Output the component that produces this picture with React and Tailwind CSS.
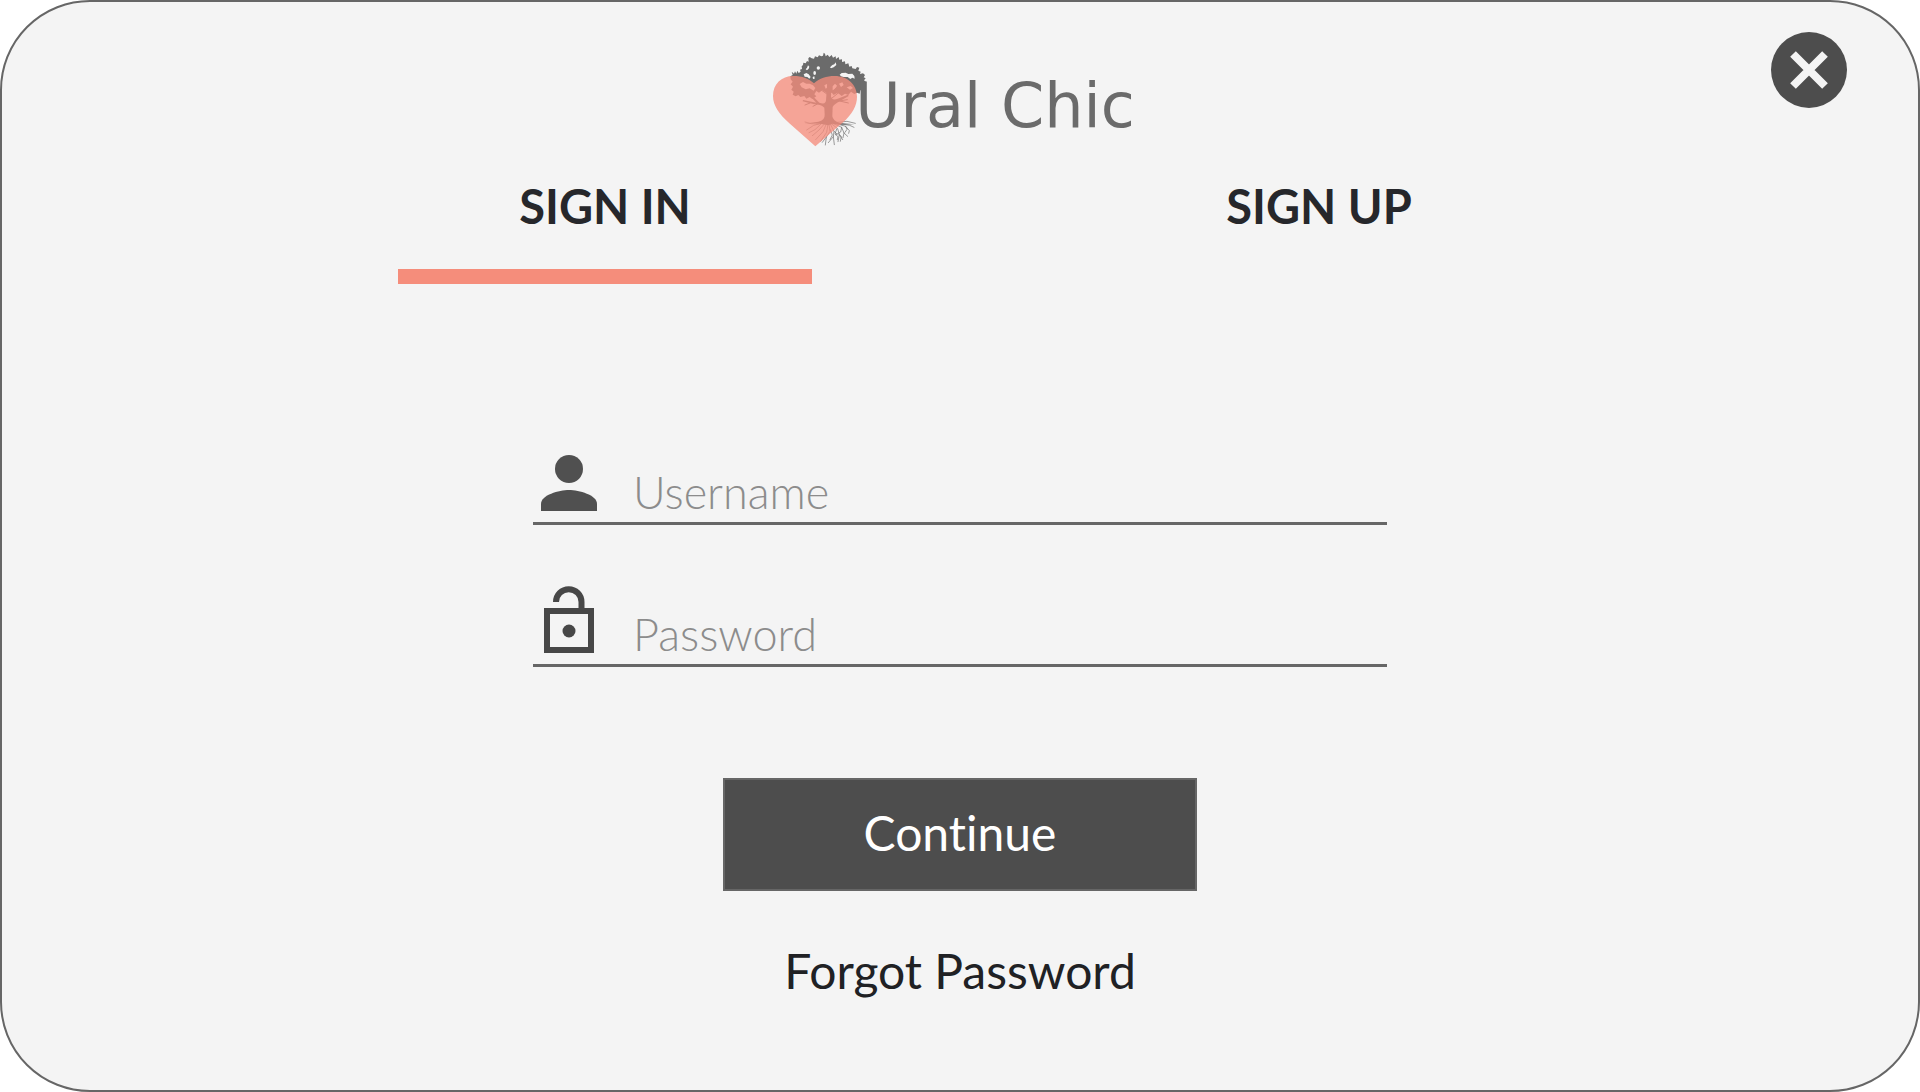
import { useState } from "react";

function TreeHeartLogo() {
  return (
    <svg viewBox="0 0 330 330" className="size-[110px] shrink-0" aria-hidden="true">
      <g fill="#6b6b6b">
        <path
          fillRule="evenodd"
          d="M76 94 L83 90 L80 80 L87 86 L90 79 L94 86 L97 77 L101 84 L107 80 L105 74 L111 72 L110 64 L114 60 L115 53 L122 55 L126 48 L131 50 L130 40 L134 36 L140 40 L147 41 L150 34 L158 37 L162 31 L169 34 L174 32 L176 23 L180 26 L182 34 L188 29 L193 36 L200 30 L204 38 L212 34 L213 42 L221 36 L223 44 L231 43 L231 51 L240 49 L241 58 L250 55 L253 65 L260 63 L262 70 L272 72 L276 66 L283 68 L280 77 L287 80 L285 87 L294 85 L300 90 L296 97 L302 100 L297 106 L304 112 L296 116 L299 124 L292 126 L294 134 L286 136 L284 146 L276 143 L268 147 L258 140 L250 150 L240 146 L230 153 L218 143 L206 150 L198 140 L184 144 L172 136 L162 143 L154 138 L148 148 L154 154 L142 162 L134 156 L124 161 L118 153 L106 156 L100 150 L92 154 L83 149 L86 140 L79 134 L84 125 L77 118 L83 110 L77 103 Z
          M129 61 L133 65 L131 71 L126 76 L122 73 L126 68 Z
          M155 69 A5 5 0 1 0 165 69 A5 5 0 1 0 155 69 Z
          M116 88 L124 84 L131 88 L137 96 L133 101 L127 96 L119 95 Z
          M145 84 A4 6 0 1 0 153 84 A4 6 0 1 0 145 84 Z
          M143 96 L148 94 L149 101 L144 102 Z
          M195 67 L202 60 L208 58 L212 52 L214 60 L206 67 L198 70 Z
          M224 89 L230 84 L242 83 L250 87 L262 86 L268 93 L269 101 L262 98 L256 102 L248 96 L236 96 L228 94 Z
          M104 117 L114 111 L124 116 L134 116 L144 121 L151 129 L146 137 L134 130 L122 133 L110 127 Z
          M203 124 L210 116 L216 122 L210 133 L203 136 Z
          M178 121 L186 117 L189 127 L182 131 Z
          M222 116 L232 112 L236 120 L228 126 Z
          M245 127 L257 123 L264 129 L255 134 Z"
        />
        <path d="M187 112 L199 112 L198 155 Q202 168 218 161 L249 149 L251 153 L224 169 Q207 178 203 186 L202 214 Q204 228 224 234 L268 238 L225 239 L202 236 L190 241 L174 238 L151 235 L118 236 L160 230 Q180 226 179 209 L178 188 Q166 178 148 178 L113 169 L114 165 L154 173 L135 153 L141 151 L163 173 Q182 180 183 166 Z" />
      </g>
      <g fill="none" stroke="#6b6b6b" strokeLinecap="round" strokeLinejoin="round">
        <path
          strokeWidth="3"
          d="M190 184 L216 169 L247 164 M224 168 L250 174 M135 174 L120 180 M157 177 L144 184 M190 151 L214 128 M187 148 L163 131 M200 160 L232 134"
        />
        <path
          strokeWidth="2"
          d="M178 233 L146 241 L125 255 M160 237 L139 236 L120 231 M167 238 L150 254 L132 263 M178 237 L162 255 L142 272 M184 237 L174 260 L152 284 M189 237 L185 262 L167 289 M192 237 L195 259 L184 276 L181 300 M184 276 L172 292 M196 237 L207 259 L205 275 L190 293 M205 275 L208 299 M199 236 L218 251 L223 269 L219 290 M223 269 L233 284 M203 235 L230 247 L237 264 L234 278 M237 264 L248 274 M210 235 L242 244 L253 257 L251 265 M225 236 L254 241 L267 247 M217 232 L246 229 L271 235 M215 252 L210 267 L219 275 L217 284 M230 247 L227 261 L213 269 M242 244 L246 253 L240 262 M196 254 L202 270 L195 284 M207 259 L216 267 M223 269 L229 275 L226 289"
        />
      </g>
      <path
        fill="#f58d7c"
        fillOpacity="0.78"
        d="M151 304 L73 235 C42 207 24 181 24 153 C24 117 49 93 85 93 C112 93 132 101 147 115 C164 100 184 93 209 93 C247 93 276 118 276 155 C276 182 263 206 232 234 Z"
      />
    </svg>
  );
}

function CloseIcon() {
  return (
    <svg viewBox="0 0 76 76" className="size-[76px]" aria-hidden="true">
      <circle cx="38" cy="38" r="38" fill="#4d4d4d" />
      <path d="M22 22 L54 54 M54 22 L22 54" stroke="#f4f4f4" strokeWidth="8" fill="none" />
    </svg>
  );
}

function PersonIcon() {
  return (
    <svg viewBox="0 0 56 56" className="h-[56px] w-[56px]" aria-hidden="true">
      <circle cx="28" cy="14" r="14" fill="#505050" />
      <path d="M0 56 V49 C0 40 18 35 28 35 C38 35 56 40 56 49 V56 Z" fill="#505050" />
    </svg>
  );
}

function UnlockIcon() {
  return (
    <svg viewBox="0 0 56 67" className="h-[67px] w-[56px]" aria-hidden="true">
      <g fill="none" stroke="#474747" strokeWidth="6">
        <path d="M15 16 A12.7 12.7 0 0 1 40.500 16 V25" />
        <rect x="6" y="25" width="44" height="39" />
      </g>
      <circle cx="28" cy="45" r="6.500" fill="#474747" />
    </svg>
  );
}

function Field({ id, label, type, icon, autoComplete }) {
  return (
    <div className="flex h-[100px] items-end border-b-3 border-[#666666] pl-2">
      <label htmlFor={id} className="mb-[11px] shrink-0" aria-label={label}>
        {icon}
      </label>
      <input
        id={id}
        type={type}
        placeholder={label}
        autoComplete={autoComplete}
        className="ml-9 h-[60px] min-w-0 flex-1 bg-transparent text-[45px] leading-[60px] font-light text-[#4e4e4e] outline-none placeholder:text-[#8c8c8c] placeholder:opacity-100"
      />
    </div>
  );
}

function Tab({ label, selected, onSelect }) {
  return (
    <button
      type="button"
      role="tab"
      aria-selected={selected}
      onClick={onSelect}
      className="flex cursor-pointer flex-col items-center text-[47px] leading-[56px] font-bold text-[#26272b]"
    >
      {label}
      <span className={selected ? "mt-[35px] h-[15px] w-[58%] bg-[#f58d7b]" : "mt-[35px] h-[15px] w-[58%]"} />
    </button>
  );
}

export default function App() {
  const [tab, setTab] = useState("in");

  return (
    <main className="relative flex min-h-screen flex-col items-center rounded-[90px] border-2 border-[#666666] bg-[#f4f4f4] px-8 pt-[43px] pb-16 font-['Lato',sans-serif] [font-variant-ligatures:none]">
      <button type="button" aria-label="Close" className="absolute top-[30px] right-[71px] cursor-pointer rounded-full">
        <CloseIcon />
      </button>

      <h1 className="flex h-[110px] items-center pr-5 text-[#6b6b6b]">
        <TreeHeartLogo />
        <span className="-ml-5 pt-3 font-['DejaVu_Sans',sans-serif] text-[62px] leading-[76px]">Ural Chic</span>
      </h1>

      <div role="tablist" className="mt-[23px] grid w-full max-w-[1432px] grid-cols-2 pl-1">
        <Tab label="SIGN IN" selected={tab === "in"} onSelect={() => setTab("in")} />
        <Tab label="SIGN UP" selected={tab === "up"} onSelect={() => setTab("up")} />
      </div>

      <form className="mt-[141px] flex w-full max-w-[854px] flex-col" onSubmit={(e) => e.preventDefault()}>
        <div className="flex flex-col gap-[42px]">
          <Field id="username" label="Username" type="text" autoComplete="username" icon={<PersonIcon />} />
          <Field id="password" label="Password" type="password" autoComplete="current-password" icon={<UnlockIcon />} />
        </div>
        <button
          type="submit"
          className="mt-[111px] h-[113px] w-full max-w-[474px] cursor-pointer self-center border-2 border-[#666666] bg-[#4d4d4d] pb-1 text-[48px] text-white"
        >
          Continue
        </button>
        <a href="#forgot" className="mt-12 self-center text-[48px] leading-[64px] text-[#202124]">
          Forgot Password
        </a>
      </form>
    </main>
  );
}
